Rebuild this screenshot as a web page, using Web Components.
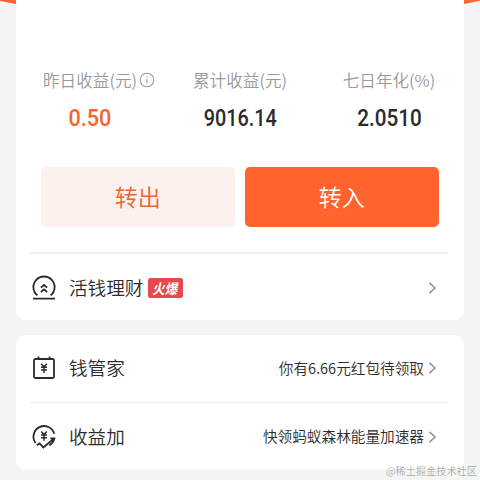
<!DOCTYPE html>
<html lang="zh-CN">
<head>
<meta charset="utf-8">
<title>理财</title>
<style>
html,body{margin:0;height:100%;overflow:hidden}
body{background:#f4f4f4;font-family:"Noto Sans CJK SC",sans-serif;color:#2b2b2b}
</style>
</head>
<body>
<fund-page></fund-page>
<script>
const define = (name, markup) => {
  const t = document.createElement('template');
  t.innerHTML = markup;
  customElements.define(name, class extends HTMLElement {
    constructor() {
      super();
      this.attachShadow({mode: 'open'}).appendChild(t.content.cloneNode(true));
    }
  });
};

define('line-icon', `<style>
:host{display:block;width:28px;height:28px}
::slotted(svg){display:block;width:28px;height:28px;fill:none;stroke:#2b2b2b;stroke-width:1.8}
</style><slot></slot>`);

define('fund-card', `<style>
:host{display:block;box-sizing:border-box;background:#fff;border-radius:9px;padding:0 16px 0 14px}
</style><slot></slot>`);

define('stat-item', `<style>
:host{display:flex;flex:none;flex-direction:column;align-items:center;width:120px}
.label{display:flex;align-items:center;height:24px;font-size:16.6px;font-weight:350;line-height:24px;color:#999;white-space:nowrap}
.value{margin-top:12px;height:28px;font:500 24px/28px Roboto,sans-serif;transform:scaleX(var(--sx,.825));color:var(--value,#2b2b2b);white-space:nowrap}
</style><div class="label"><slot name="label"></slot></div><div class="value"><slot></slot></div>`);

define('info-mark', `<style>
:host{display:block;margin:0 -18px 0 2px}svg{display:block}
</style><svg width="16" height="16" viewBox="0 0 16 16" fill="none" stroke="#999" stroke-width="1.1"><circle cx="8" cy="8" r="6.8"/><path d="M8 7v4.5M8 4.2v1.4"/></svg>`);

define('action-button', `<style>
:host{display:flex;align-items:center;justify-content:center;box-sizing:border-box;flex:1;height:60px;padding-bottom:2px;border-radius:5px;font-size:23px;font-weight:350;line-height:34px;background:var(--bg);color:var(--fg)}
</style><slot></slot>`);

define('hot-badge', `<style>
:host{display:flex;align-items:center;justify-content:center;width:35px;height:20px;border-radius:2.5px;background:#e5484d;color:#fff;font-size:14px;font-weight:700;line-height:20px;margin:0 0 1px 5px}
span{transform:skewX(-10deg) scaleX(.9)}
</style><span><slot></slot></span>`);

define('menu-row', `<style>
:host{display:flex;align-items:center;box-sizing:border-box;height:67px}
.title{margin:0 0 2px 11px;font-size:18.6px;font-weight:350;line-height:28px;white-space:nowrap}
.note{margin:0 0 1px auto;font-size:14.65px;font-weight:350;line-height:22px;white-space:nowrap}
.arrow{display:block;margin:0 10px 0 4px}
</style><slot name="icon"></slot><div class="title"><slot></slot></div><slot name="badge"></slot><div class="note"><slot name="note"></slot></div>
<svg class="arrow" width="10" height="14" viewBox="0 0 10 14" fill="none" stroke="#929292" stroke-width="1.6"><path d="M1.5 1.8 7 7 1.5 12.2"/></svg>`);

define('fund-page', `<style>
:host{display:block;position:relative;width:480px;height:480px;overflow:hidden}
.top{position:absolute;left:0;top:0;display:block}
main{position:relative;display:flex;flex-direction:column;gap:14.5px;padding:0 16px}
.summary{height:320px;border-radius:0 0 9px 9px}
.stats{display:flex;gap:29px;padding:68px 0 0;height:166.5px;box-sizing:border-box}
.actions{display:flex;gap:10.5px;padding:0 9.5px 0 11px}
.sep{height:1.5px;background:#ededed}
.first{margin-top:25.5px;margin-bottom:1px}
.more{height:135px}
.mark{position:absolute;right:3px;bottom:2px;font:350 10.2px/15px "Noto Sans CJK SC",sans-serif;color:#aaa;text-shadow:0 0 1px #fff}
</style>
<svg class="top" width="480" height="6"><path fill="#ff632e" d="M0 0H480V.8L464 4H16L0 1Z"/></svg>
<main>
<fund-card class="summary">
  <div class="stats">
    <stat-item style="--value:#f5642f;--sx:.9"><span slot="label">昨日收益(元)</span><info-mark slot="label"></info-mark>0.50</stat-item>
    <stat-item style="margin-left:1px"><span slot="label">累计收益(元)</span>9016.14</stat-item>
    <stat-item style="--sx:.86"><span slot="label">七日年化(%)</span>2.0510</stat-item>
  </div>
  <div class="actions">
    <action-button style="--bg:#fdf1ed;--fg:#ee622f">转出</action-button>
    <action-button style="--bg:#ff642f;--fg:#fff">转入</action-button>
  </div>
  <div class="sep first"></div>
  <menu-row><line-icon slot="icon"><svg viewBox="0 0 28 28"><path d="M7.4 21.4A10.6 10.6 0 1 1 20.6 21.4M3 24.6H25M10.9 13.6 14 11 17.1 13.6M10.9 18 14 15.4 17.1 18"/></svg></line-icon>活钱理财<hot-badge slot="badge">火爆</hot-badge></menu-row>
</fund-card>
<fund-card class="more">
  <menu-row><line-icon slot="icon"><svg viewBox="0 0 28 28"><rect x="4" y="5" width="20" height="19" rx="1.5"/><path d="M8.5 2.5V5M19.5 2.5V5"/><path stroke-width="1.5" d="M11.2 9.8 14 12.8 16.8 9.8M14 12.8V19M11 13.2H17M11 16H17"/></svg></line-icon>钱管家<span slot="note">你有6.66元红包待领取</span></menu-row>
  <div class="sep"></div>
  <menu-row><line-icon slot="icon"><svg viewBox="0 0 28 28"><path d="M5.6 20A10.6 10.6 0 1 1 24.3 10.8M6.8 22.2 9.6 20.4 13.4 24.4 23.4 16M20.4 15.4H24.4Q23.2 20 19.4 22.4"/><path stroke-width="1.5" d="M11.2 8.6 14 11.6 16.8 8.6M14 11.6V17.8M11 12H17M11 14.8H17"/></svg></line-icon>收益加<span slot="note">快领蚂蚁森林能量加速器</span></menu-row>
</fund-card>
</main>
<div class="mark">@稀土掘金技术社区</div>`);
</script>
</body>
</html>
